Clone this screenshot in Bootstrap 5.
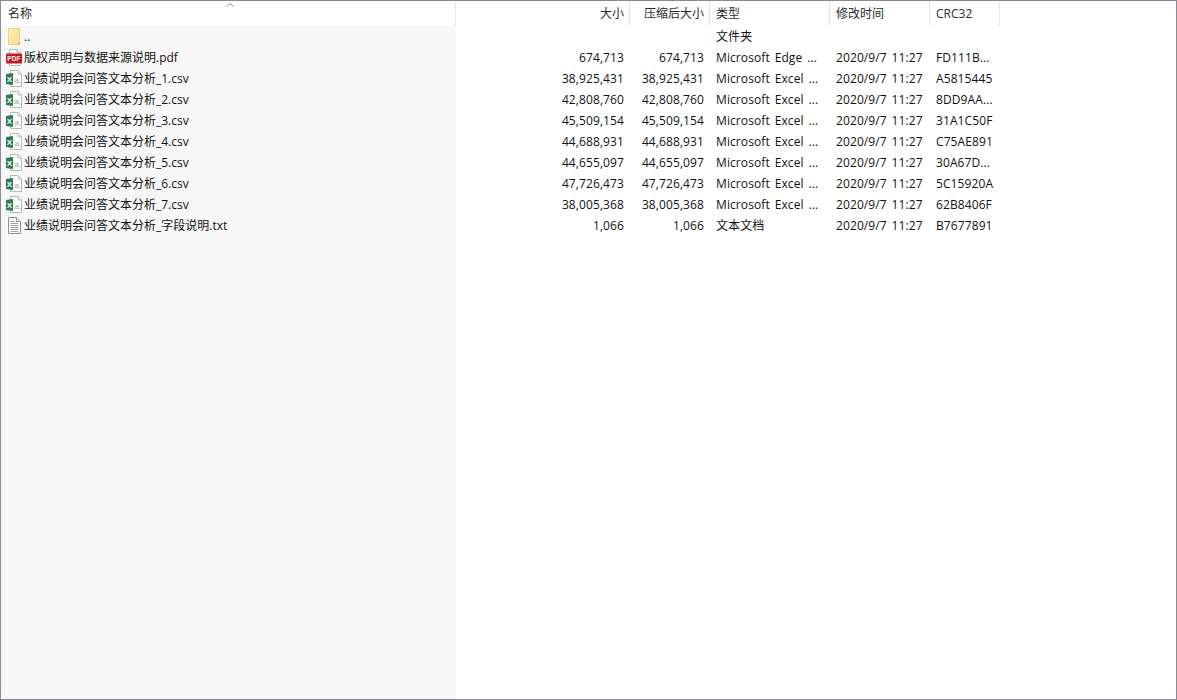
<!DOCTYPE html>
<html lang="zh-CN">
<head>
<meta charset="utf-8">
<title>文件列表</title>
<link rel="stylesheet" href="https://cdn.jsdelivr.net/npm/bootstrap@5.3.0/dist/css/bootstrap.min.css">
<style>
html,body{height:100%;margin:0;background:#fff;overflow:hidden}
.arc-window{height:700px;border:1px solid #8b8b96;background:#fff;
  font:12px/21px "Open Sans","Noto Sans CJK SC",sans-serif;color:#111}
.arc-table{table-layout:fixed;width:999px;height:698px;margin:0;border-collapse:collapse;font-size:12px;--bs-table-bg:transparent;color:#111}
.arc-table th,.arc-table td{padding:0 6px;border:0;white-space:nowrap;overflow:hidden;font-weight:400;vertical-align:middle;box-shadow:none}
.arc-table thead th{height:25px;position:relative;color:#2b2b2b}
.arc-table thead th:first-child{padding-left:7px}
.arc-table thead th::after{content:"";position:absolute;right:0;top:1px;bottom:0;width:1px;background:#e5e5e5}
.arc-table tbody tr.arc-row td{height:21px;line-height:21px;letter-spacing:.1px;word-spacing:1.6px}
.arc-table td.arc-name,.arc-table tr.arc-fill td:first-child{background:#f7f7f7}
.arc-table tbody tr.arc-row td.arc-name{padding:0 0 0 4px;letter-spacing:0;word-spacing:0}
.arc-name-in{display:flex;align-items:center;gap:1px;height:21px}
.arc-name-in svg{flex:none;width:18px;height:18px}
.arc-sort{position:absolute;left:225px;top:2px;width:8px;height:4px}
.arc-end{text-align:right}
.arc-fill td{height:auto}
.arc-pdf-label{font:700 6.500px "Liberation Sans",sans-serif;fill:#fff;letter-spacing:.2px}
.arc-xls-label{font:700 8px "Liberation Sans",sans-serif;fill:#fff}
.arc-a-label{font:400 8px "Liberation Sans",sans-serif;fill:#8fa9a2}
</style>
</head>
<body>
<svg width="0" height="0" class="position-absolute">
  <defs>
    <linearGradient id="g-folder" x1="0" y1="0" x2="1" y2="1"><stop offset="0" stop-color="#fff0ba"/><stop offset="1" stop-color="#fbdc84"/></linearGradient>
    <symbol id="i-folder" viewBox="0 0 18 18">
      <path d="M3.500 .5H14.500V16.500H3.500Z" fill="url(#g-folder)" stroke="#ecd08a"/>
      <path d="M15 13.500V16.500H13V14.500Z" fill="#e6b64a"/>
    </symbol>
    <symbol id="i-pdf" viewBox="0 0 18 18">
      <path d="M4.500 .5H12L15.500 4V16.500H4.500Z" fill="#fff" stroke="#b5b5b5"/>
      <path d="M12 .5V4H15.500" fill="none" stroke="#b5b5b5"/>
      <rect x="1" y="4.500" width="16" height="10" rx="1" fill="#c8171e"/>
      <text class="arc-pdf-label" x="9" y="12" text-anchor="middle">PDF</text>
    </symbol>
    <symbol id="i-xls" viewBox="0 0 18 18">
      <path d="M5.500 .5H13L16.500 4V16.500H5.500Z" fill="#fff" stroke="#b9b9b9"/>
      <path d="M13 .5V4H16.500" fill="none" stroke="#b9b9b9"/>
      <text class="arc-a-label" x="9.500" y="13">a,</text>
      <path d="M1 4L8 3V15L1 14Z" fill="#2c7d55"/>
      <text class="arc-xls-label" x="4.500" y="12" text-anchor="middle">X</text>
    </symbol>
    <symbol id="i-txt" viewBox="0 0 18 18">
      <path d="M3.500 .5H11.500L15.500 4.500V16.500H3.500Z" fill="#fff" stroke="#8f8f8f"/>
      <path d="M11.500 .5V4.500H15.500" fill="#eee" stroke="#8f8f8f"/>
      <path d="M5.500 4.500H10M5.500 6.500H13.500M5.500 8.500H13.500M5.500 10.500H13.500M5.500 12.500H13.500M5.500 14.500H13.500" stroke="#a5a5a5"/>
    </symbol>
  </defs>
</svg>
<div class="arc-window">
<table class="table arc-table">
  <colgroup><col style="width:455px"><col style="width:174px"><col style="width:80px"><col style="width:120px"><col style="width:100px"><col style="width:70px"></colgroup>
  <thead>
    <tr>
      <th scope="col">名称<svg class="arc-sort" viewBox="0 0 8 4"><path d="M.5 3.500L4 .5L7.500 3.500" fill="none" stroke="#8f8f8f"/></svg></th>
      <th scope="col" class="arc-end">大小</th>
      <th scope="col" class="arc-end">压缩后大小</th>
      <th scope="col">类型</th>
      <th scope="col">修改时间</th>
      <th scope="col">CRC32</th>
    </tr>
  </thead>
  <tbody>
    <tr class="arc-row"><td class="arc-name"><div class="arc-name-in"><svg><use href="#i-folder"/></svg><span>..</span></div></td><td></td><td></td><td>文件夹</td><td></td><td></td></tr>
    <tr class="arc-row"><td class="arc-name"><div class="arc-name-in"><svg><use href="#i-pdf"/></svg><span>版权声明与数据来源说明.pdf</span></div></td><td class="arc-end">674,713</td><td class="arc-end">674,713</td><td>Microsoft Edge ...</td><td>2020/9/7 11:27</td><td>FD111B...</td></tr>
    <tr class="arc-row"><td class="arc-name"><div class="arc-name-in"><svg><use href="#i-xls"/></svg><span>业绩说明会问答文本分析_1.csv</span></div></td><td class="arc-end">38,925,431</td><td class="arc-end">38,925,431</td><td>Microsoft Excel ...</td><td>2020/9/7 11:27</td><td>A5815445</td></tr>
    <tr class="arc-row"><td class="arc-name"><div class="arc-name-in"><svg><use href="#i-xls"/></svg><span>业绩说明会问答文本分析_2.csv</span></div></td><td class="arc-end">42,808,760</td><td class="arc-end">42,808,760</td><td>Microsoft Excel ...</td><td>2020/9/7 11:27</td><td>8DD9AA...</td></tr>
    <tr class="arc-row"><td class="arc-name"><div class="arc-name-in"><svg><use href="#i-xls"/></svg><span>业绩说明会问答文本分析_3.csv</span></div></td><td class="arc-end">45,509,154</td><td class="arc-end">45,509,154</td><td>Microsoft Excel ...</td><td>2020/9/7 11:27</td><td>31A1C50F</td></tr>
    <tr class="arc-row"><td class="arc-name"><div class="arc-name-in"><svg><use href="#i-xls"/></svg><span>业绩说明会问答文本分析_4.csv</span></div></td><td class="arc-end">44,688,931</td><td class="arc-end">44,688,931</td><td>Microsoft Excel ...</td><td>2020/9/7 11:27</td><td>C75AE891</td></tr>
    <tr class="arc-row"><td class="arc-name"><div class="arc-name-in"><svg><use href="#i-xls"/></svg><span>业绩说明会问答文本分析_5.csv</span></div></td><td class="arc-end">44,655,097</td><td class="arc-end">44,655,097</td><td>Microsoft Excel ...</td><td>2020/9/7 11:27</td><td>30A67D...</td></tr>
    <tr class="arc-row"><td class="arc-name"><div class="arc-name-in"><svg><use href="#i-xls"/></svg><span>业绩说明会问答文本分析_6.csv</span></div></td><td class="arc-end">47,726,473</td><td class="arc-end">47,726,473</td><td>Microsoft Excel ...</td><td>2020/9/7 11:27</td><td>5C15920A</td></tr>
    <tr class="arc-row"><td class="arc-name"><div class="arc-name-in"><svg><use href="#i-xls"/></svg><span>业绩说明会问答文本分析_7.csv</span></div></td><td class="arc-end">38,005,368</td><td class="arc-end">38,005,368</td><td>Microsoft Excel ...</td><td>2020/9/7 11:27</td><td>62B8406F</td></tr>
    <tr class="arc-row"><td class="arc-name"><div class="arc-name-in"><svg><use href="#i-txt"/></svg><span>业绩说明会问答文本分析_字段说明.txt</span></div></td><td class="arc-end">1,066</td><td class="arc-end">1,066</td><td>文本文档</td><td>2020/9/7 11:27</td><td>B7677891</td></tr>
    <tr class="arc-fill"><td></td><td></td><td></td><td></td><td></td><td></td></tr>
  </tbody>
</table>
</div>
<script src="https://cdn.jsdelivr.net/npm/bootstrap@5.3.0/dist/js/bootstrap.bundle.min.js"></script>
</body>
</html>
